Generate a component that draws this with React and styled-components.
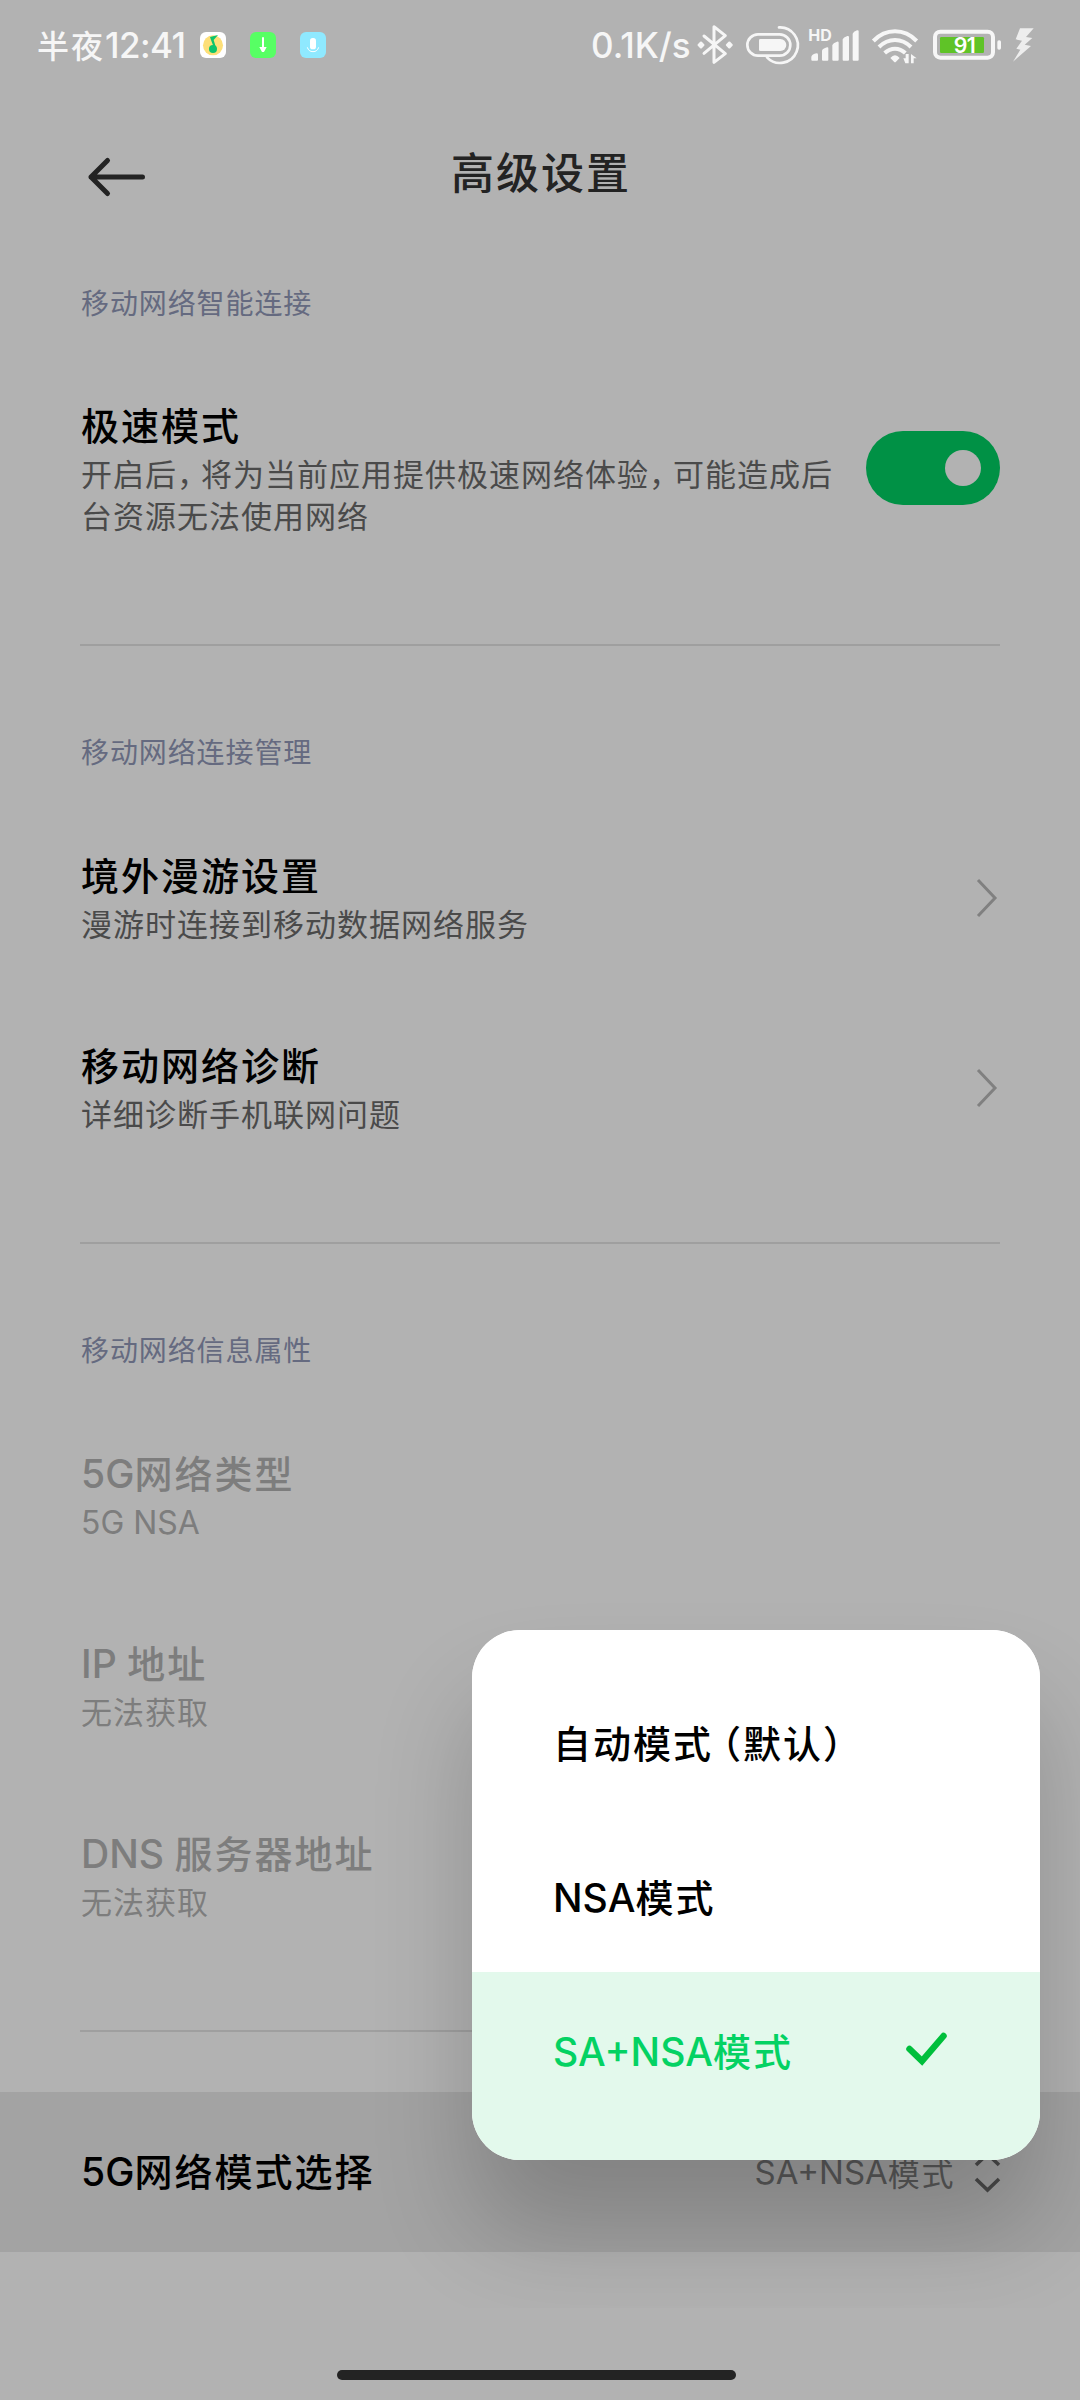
import styled, { createGlobalStyle } from "styled-components";

const connectRows = [
  { title: "境外漫游设置", lines: ["漫游时连接到移动数据网络服务"] },
  { title: "移动网络诊断", lines: ["详细诊断手机联网问题"] },
];

const infoRows = [
  { title: "5G网络类型", lines: ["5G NSA"] },
  { title: "IP 地址", lines: ["无法获取"] },
  { title: "DNS 服务器地址", lines: ["无法获取"] },
];

const modes = ["自动模式（默认）", "NSA模式", "SA+NSA模式"];
const selected = "SA+NSA模式";

// latin runs and full-width punctuation are set tighter than the hanzi
const Mixed = ({ text }) =>
  text.split(/([A-Za-z0-9+ ]+|，|（)/).map((part, i) => {
    if (part === "，") return <Comma key={i}>{part}</Comma>;
    if (part === "（") return <OpenParen key={i}>{part}</OpenParen>;
    if (/^[A-Za-z0-9+ ]+$/.test(part)) return <Latin key={i}>{part}</Latin>;
    return part;
  });

const ItemText = ({ title, lines, disabled }) => (
  <div>
    <Title $disabled={disabled}>
      <Mixed text={title} />
    </Title>
    {lines.map((line) => (
      <Desc key={line} $disabled={disabled}>
        <Mixed text={line} />
      </Desc>
    ))}
  </div>
);

const StatusIcons = () => (
  <>
    <svg width="44" height="60" viewBox="12 0 132 180">
      <path
        d="M42 63L106 116L72 142V35L106 62L42 115"
        fill="none"
        stroke="#f6f6f6"
        strokeWidth="9"
        strokeLinecap="round"
        strokeLinejoin="round"
      />
      <path
        d="M33 83L40 90L33 97L26 90ZM118 83L125 90L118 97L111 90Z"
        fill="#f6f6f6"
        stroke="#f6f6f6"
        strokeWidth="7"
        strokeLinejoin="round"
      />
    </svg>
    <svg width="60" height="60" viewBox="156 0 180 180">
      <g fill="none" stroke="#f6f6f6" strokeWidth="8" strokeLinecap="round">
        <rect x="172" y="58" width="129" height="64" rx="32" />
        <path d="M267 37A53.5 53.5 0 1 1 231 127" />
      </g>
      <path
        d="M211 72H271A18 18 0 0 1 271 108H211Q207 108 207 104V76Q207 72 211 72Z"
        fill="#f6f6f6"
      />
    </svg>
    <svg width="56" height="60" viewBox="18 0 168 180">
      <HdText x="25" y="78">
        HD
      </HdText>
      <path
        d="M34 134V125Q36 118 50 115Q54 115 54 119V134Q54 137 51 137H37Q34 137 34 134ZM66 134V107Q68 101 81 97Q85 96 85 100V134Q85 137 82 137H69Q66 137 66 134ZM97 134V90Q99 84 111 80Q116 79 116 83V134Q116 137 113 137H100Q97 137 97 134ZM128 134V73Q130 67 142 63Q147 62 147 66V134Q147 137 144 137H131Q128 137 128 134ZM158 134V56Q160 50 171 46Q176 45 176 49V134Q176 137 173 137H161Q158 137 158 134Z"
        fill="#f6f6f6"
      />
    </svg>
    <svg width="56" height="60" viewBox="198 0 168 180">
      <g fill="none" stroke="#f6f6f6" strokeWidth="12">
        <path d="M220 78Q248 49 285 49Q322 49 350 78" />
        <path d="M237 96Q258 75 285 75Q312 75 333 96" />
        <path d="M254 114Q268 101 285 101Q302 101 316 114" />
      </g>
      <path
        d="M271 129Q285 113 299 129L288 140Q285 143 282 140Z"
        fill="#f6f6f6"
      />
      <path
        d="M316 145L310 130H317V117H326V145ZM333 145V117L350 130H341V145Z"
        fill="#f6f6f6"
      />
    </svg>
    <Battery width="74" height="60" viewBox="15 0 222 180">
      <rect
        x="30"
        y="50"
        width="174"
        height="78"
        rx="16"
        fill="none"
        stroke="#f6f6f6"
        strokeWidth="12"
      />
      <rect x="45" y="66" width="132" height="48" rx="4" fill="#5fc327" />
      <rect x="217" y="76" width="11" height="28" rx="5" fill="#f6f6f6" />
      <BatteryText x="86" y="115">
        91
      </BatteryText>
    </Battery>
    <svg width="30" height="60" viewBox="249 0 90 180">
      <path
        d="M285 40H326L303 66L322 69L299 89L318 93L264 140L286 104L274 101L291 77L272 73Z"
        fill="#ededed"
      />
    </svg>
  </>
);

const App = () => {
  return (
    <Screen>
      <GlobalStyle />
      <StatusBar>
        <Time>
          半夜<Digits>12:41</Digits>
        </Time>
        <Notices>
          <AppIcon viewBox="0 0 78 78" $color="#fff">
            <circle cx="39" cy="40" r="30" fill="#fddf78" />
            <circle cx="39" cy="51" r="12" fill="#0cc46c" />
            <path
              d="M30 15L54 9L41 24L49 50H43L33 24Z"
              fill="#0cc46c"
            />
          </AppIcon>
          <AppIcon viewBox="0 0 78 78" $color="#57ff64">
            <path d="M36 16H42V45H50L42 60H36L28 45H36Z" fill="#fff" />
          </AppIcon>
          <AppIcon viewBox="0 0 78 78" $color="#8fe9ff">
            <rect x="30" y="18" width="18" height="34" rx="8" fill="#fff" />
            <path
              d="M22 46Q26 59 39 59Q52 59 56 46"
              fill="none"
              stroke="#fff"
              strokeWidth="3"
            />
          </AppIcon>
        </Notices>
        <Speed>0.1K/s</Speed>
        <StatusIcons />
      </StatusBar>

      <Header>
        <svg width="62" height="46" viewBox="0 0 62 46" fill="none">
          <path
            d="M21.5 6.5L5 23L21.5 39.5M5 23H56.5"
            stroke="#232323"
            strokeWidth="5"
            strokeLinecap="round"
            strokeLinejoin="round"
          />
        </svg>
        <HeaderTitle>高级设置</HeaderTitle>
      </Header>

      <Section $first>
        <Label>移动网络智能连接</Label>
        <Row $tall>
          <ItemText
            title="极速模式"
            lines={[
              "开启后，将为当前应用提供极速网络体验，可能造成后",
              "台资源无法使用网络",
            ]}
          />
          <Toggle>
            <Knob />
          </Toggle>
        </Row>
      </Section>
      <Divider />
      <Section>
        <Label>移动网络连接管理</Label>
        {connectRows.map((row) => (
          <Row key={row.title}>
            <ItemText {...row} />
            <Chevron width="24" height="42" viewBox="0 0 24 42" fill="none">
              <path d="M3 3L20 21L3 39" stroke="#808080" strokeWidth="3" />
            </Chevron>
          </Row>
        ))}
      </Section>
      <Divider />
      <Section>
        <Label>移动网络信息属性</Label>
        {infoRows.map((row) => (
          <Row key={row.title}>
            <ItemText {...row} disabled />
          </Row>
        ))}
      </Section>
      <Divider />
      <ModeRow>
        <Title>
          <Mixed text="5G网络模式选择" />
        </Title>
        <ModeValue>
          <Mixed text={selected} />
          <svg width="28" height="44" viewBox="0 0 28 44" fill="none">
            <path
              d="M3 15L14.5 4L26 15M3 29L14.5 40L26 29"
              stroke="#4a4a4a"
              strokeWidth="3.6"
            />
          </svg>
        </ModeValue>
      </ModeRow>
      <HomeBar />

      <PopupLayer>
        <Popup>
          {modes.map((mode) => (
            <Option key={mode} $active={mode === selected}>
              <span>
                <Mixed text={mode} />
              </span>
              {mode === selected && (
                <svg width="44" height="36" viewBox="0 0 44 36" fill="none">
                  <path
                    d="M5.5 18L18 30L39.5 5"
                    stroke="#00bf3c"
                    strokeWidth="6.5"
                    strokeLinecap="round"
                  />
                </svg>
              )}
            </Option>
          ))}
        </Popup>
      </PopupLayer>
    </Screen>
  );
};

export default App;

const GlobalStyle = createGlobalStyle`
  * {
    box-sizing: border-box;
  }
  body {
    margin: 0;
    background: #b2b2b2;
    font-family: Inter, "Noto Sans CJK SC", sans-serif;
  }
  svg {
    display: block;
    flex: none;
  }
`;

const Screen = styled.div`
  position: relative;
  width: 1080px;
  height: 2400px;
  overflow: hidden;
  background: #b2b2b2;
  white-space: nowrap;
`;

const StatusBar = styled.div`
  height: 90px;
  padding-left: 37px;
  display: flex;
  align-items: center;
  color: #f6f6f6;
  font-weight: 500;
`;

const Time = styled.div`
  width: 163px;
  font-size: 32px;
  line-height: 50px;
  letter-spacing: 2px;
  padding-top: 2px;
`;

const Digits = styled.span`
  font-size: 35px;
  letter-spacing: -0.6px;
`;

const Notices = styled.div`
  display: flex;
  gap: 24px;
  width: 391px;
`;

const AppIcon = styled.svg`
  width: 26px;
  height: 26px;
  border-radius: 6px;
  background: ${(p) => p.$color};
`;

const Speed = styled.div`
  width: 103px;
  font-size: 35px;
  line-height: 50px;
  margin-right: 0;

  & + svg {
    margin-right: 4px;
  }
  & + svg + svg,
  & + svg + svg + svg {
    margin-right: 4px;
  }
`;

const HdText = styled.text`
  fill: #f6f6f6;
  font-size: 48px;
  font-weight: 700;
`;

const Battery = styled.svg`
  margin: 0 4px 0 8px;
`;

const BatteryText = styled.text`
  fill: #fff;
  font-size: 64px;
  font-weight: 600;
  letter-spacing: -2px;
`;

const Header = styled.div`
  height: 165px;
  padding-left: 86px;
  display: flex;
  align-items: center;

  > svg {
    margin-top: 8px;
  }
`;

const HeaderTitle = styled.div`
  margin-left: 303px;
  font-size: 43px;
  line-height: 60px;
  letter-spacing: 2px;
  font-weight: 500;
  color: #232323;
`;

const Section = styled.div`
  padding: ${(p) => (p.$first ? "0" : "58px")} 80px 59px 81px;
`;

const Label = styled.div`
  height: 99px;
  line-height: 99px;
  font-size: 28px;
  letter-spacing: 0.9px;
  color: #656a80;
`;

const Row = styled.div`
  height: ${(p) => (p.$tall ? "231px" : "190px")};
  display: flex;
  align-items: center;
  justify-content: space-between;
`;

const Title = styled.div`
  font-size: 38px;
  line-height: 50px;
  letter-spacing: 2px;
  font-weight: 500;
  color: ${(p) => (p.$disabled ? "#7d7d7d" : "#000")};
`;

const Desc = styled.div`
  font-size: 31px;
  line-height: 42px;
  letter-spacing: 1px;
  color: ${(p) => (p.$disabled ? "#7d7d7d" : "#4a4a4a")};

  ${Title} + & {
    margin-top: 3px;
  }
`;

const Latin = styled.span`
  font-size: 1.03em;
  letter-spacing: 0;
  white-space: pre;
`;

const Comma = styled.span`
  display: inline-block;
  width: 24px;
`;

const OpenParen = styled.span`
  display: inline-block;
  width: 30px;
  text-indent: -10px;
`;

const Toggle = styled.div`
  width: 134px;
  height: 74px;
  margin-bottom: 3px;
  padding-right: 19px;
  border-radius: 37px;
  background: #009145;
  display: flex;
  align-items: center;
  justify-content: flex-end;
`;

const Knob = styled.div`
  width: 36px;
  height: 36px;
  border-radius: 50%;
  background: #b2b2b2;
`;

const Chevron = styled.svg`
  margin-right: 1px;
`;

const Divider = styled.div`
  height: 2px;
  margin: 0 80px;
  background: #9f9f9f;
`;

const ModeRow = styled.div`
  height: 160px;
  margin-top: 60px;
  padding: 0 79px 0 81px;
  display: flex;
  align-items: center;
  justify-content: space-between;
  background: #a3a3a3;
`;

const ModeValue = styled.div`
  display: flex;
  align-items: center;
  font-size: 32px;
  letter-spacing: 1.6px;
  color: #5a5a5a;

  > svg {
    margin-left: 18px;
  }
`;

const HomeBar = styled.div`
  width: 399px;
  height: 10px;
  margin: 118px 0 0 337px;
  border-radius: 5px;
  background: #232323;
`;

/* the shadow is cut off above the gesture area */
const PopupLayer = styled.div`
  position: absolute;
  inset: 0 0 92px;
  overflow: hidden;
`;

const Popup = styled.div`
  position: absolute;
  right: 40px;
  bottom: 148px;
  width: 568px;
  height: 530px;
  border-radius: 48px;
  background: #fff;
  box-shadow: 0 70px 100px rgba(0, 0, 0, 0.2);
  overflow: hidden;
`;

const Option = styled.div`
  height: 154px;
  padding: 0 92px 0 81px;
  display: flex;
  align-items: center;
  justify-content: space-between;
  font-size: 38px;
  letter-spacing: 2px;
  font-weight: 500;
  color: ${(p) => (p.$active ? "#04d263" : "#000")};
  background: ${(p) => (p.$active ? "#e3f9ec" : "#fff")};

  &:first-child {
    height: 188px;
    padding-top: 34px;
  }
  &:last-child {
    height: 188px;
    padding-bottom: 34px;
  }
`;
